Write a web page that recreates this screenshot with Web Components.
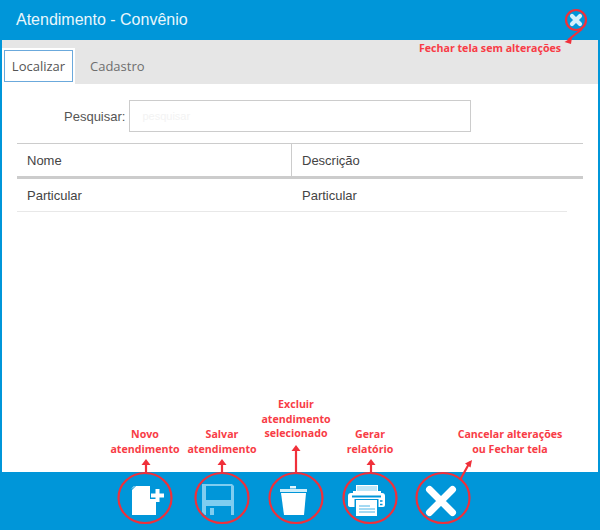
<!DOCTYPE html>
<html lang="pt-BR">
<head>
<meta charset="utf-8">
<title>Atendimento - Convênio</title>
<style>
html, body { margin: 0; height: 100%; background: #fff; }
</style>
</head>
<body>
<app-window>
  <title-bar slot="top">Atendimento - Convênio</title-bar>
  <tab-bar slot="top"></tab-bar>
  <search-row></search-row>
  <data-table></data-table>
  <action-bar slot="bottom"></action-bar>
  <help-notes slot="over"></help-notes>
</app-window>

<script>
class AppWindow extends HTMLElement {
    connectedCallback() {
        this.attachShadow({ mode: 'open' });
        this.shadowRoot.innerHTML = `
            <style>
                :host {
                    display: flex;
                    flex-direction: column;
                    position: relative;
                    width: 600px;
                    height: 530px;
                    box-sizing: border-box;
                    background: #0096d9;
                    overflow: hidden;
                }
                .body {
                    flex: 1;
                    background: #fff;
                    margin: 0 2px;
                    min-height: 0;
                }
            </style>
            <slot name="top"></slot>
            <div class="body"><slot></slot></div>
            <slot name="bottom"></slot>
            <slot name="over"></slot>
        `;
    }
}

class TitleBar extends HTMLElement {
    connectedCallback() {
        this.attachShadow({ mode: 'open' });
        this.shadowRoot.innerHTML = `
            <style>
                :host {
                    display: flex;
                    align-items: center;
                    justify-content: space-between;
                    height: 40px;
                    padding: 0 14px 0 16px;
                    box-sizing: border-box;
                    background: #0096d9;
                    color: #e9f6fc;
                    font: 16px "Liberation Sans", Arial, sans-serif;
                }
                svg { display: block; }
            </style>
            <span><slot></slot></span>
            <svg width="20" height="20" viewBox="0 0 20 20">
                <path d="M6 6 14 14M14 6 6 14" stroke="#d5effb" stroke-width="4.2" stroke-linecap="round" fill="none"/>
            </svg>
        `;
    }
}

class TabBar extends HTMLElement {
    connectedCallback() {
        this.attachShadow({ mode: 'open' });
        this.shadowRoot.innerHTML = `
            <style>
                :host {
                    display: flex;
                    align-items: flex-end;
                    height: 44px;
                    margin: 0 2px;
                    box-sizing: border-box;
                    background: #e6e6e6;
                    font: 13px "Open Sans", sans-serif;
                }
                .tab {
                    height: 36px;
                    box-sizing: border-box;
                    padding: 2px;
                    background: #fff;
                    width: 73px;
                }
                .tab span {
                    display: flex;
                    align-items: center;
                    justify-content: center;
                    height: 32px;
                    box-sizing: border-box;
                    border: 1px solid #6ba9dc;
                    color: #555;
                }
                .other {
                    padding-left: 15px;
                    height: 34px;
                    line-height: 32px;
                    color: #6e6e6e;
                }
            </style>
            <div class="tab"><span>Localizar</span></div>
            <div class="other">Cadastro</div>
        `;
    }
}

class SearchRow extends HTMLElement {
    connectedCallback() {
        this.attachShadow({ mode: 'open' });
        this.shadowRoot.innerHTML = `
            <style>
                :host {
                    display: flex;
                    align-items: center;
                    gap: 4px;
                    height: 32px;
                    margin-top: 16px;
                    padding-left: 62px;
                    font: 13px "Liberation Sans", Arial, sans-serif;
                    color: #555;
                }
                input {
                    width: 342px;
                    height: 32px;
                    box-sizing: border-box;
                    border: 1px solid #ccc;
                    padding: 0 12px;
                    margin: 0;
                    font: 11px "Liberation Sans", Arial, sans-serif;
                    outline: none;
                }
                input::placeholder { color: #f3f3f3; }
            </style>
            <label>Pesquisar:</label>
            <input placeholder="pesquisar">
        `;
    }
}

class DataTable extends HTMLElement {
    connectedCallback() {
        this.attachShadow({ mode: 'open' });
        this.shadowRoot.innerHTML = `
            <style>
                :host {
                    display: block;
                    margin: 11px 15px 0 15px;
                    font: 13px "Liberation Sans", Arial, sans-serif;
                    color: #444;
                }
                .head {
                    display: grid;
                    grid-template-columns: 274px 1fr;
                    height: 32px;
                    border-top: 1px solid #ccc;
                    border-bottom: 3px solid #ccc;
                }
                .head div, .row div {
                    display: flex;
                    align-items: center;
                    padding-left: 10px;
                }
                .head div + div { border-left: 1px solid #ccc; }
                .row {
                    display: grid;
                    grid-template-columns: 275px 1fr;
                    height: 32px;
                    margin-right: 16px;
                    border-bottom: 1px solid #e8e8e8;
                }
            </style>
            <div class="head"><div>Nome</div><div>Descrição</div></div>
            <div class="row"><div>Particular</div><div>Particular</div></div>
        `;
    }
}

class ActionBar extends HTMLElement {
    connectedCallback() {
        this.attachShadow({ mode: 'open' });
        this.shadowRoot.innerHTML = `
            <style>
                :host {
                    display: flex;
                    align-items: center;
                    gap: 20px;
                    height: 58px;
                    padding-left: 118px;
                    box-sizing: border-box;
                    background: #0096d9;
                }
                button {
                    width: 54px;
                    height: 50px;
                    padding: 0;
                    border: 0;
                    background: none;
                    display: flex;
                    align-items: center;
                    justify-content: center;
                }
                svg { display: block; }
            </style>
            <button title="Novo">
                <svg width="40" height="36" viewBox="0 0 40 36">
                    <path d="M11 3H25V16H31V32H7V7Z" fill="#fff"/>
                    <path d="M7 5.500 9.500 3" stroke="#cdeefb" stroke-width="1"/>
                    <path d="M32.500 6V19M26 12.500H39" stroke="#fff" stroke-width="4"/>
                </svg>
            </button>
            <button title="Salvar">
                <svg width="34" height="34" viewBox="0 0 34 34">
                    <path fill-rule="evenodd" fill="#7fcdf0" d="M0 0H30L32 2V31H3L0 28ZM4 2V16H29V2ZM4 22V31H8V24H12V31H29V22Z"/>
                </svg>
            </button>
            <button title="Excluir">
                <svg width="30" height="34" viewBox="0 0 30 34">
                    <path d="M12 2H18V4.500H12Z" fill="#e2f5fc"/>
                    <path d="M2 5H29V8H2Z" fill="#cfeefa"/>
                    <path d="M3 9H28L26 31H6Z" fill="#fff"/>
                </svg>
            </button>
            <button title="Gerar">
                <svg width="38" height="34" viewBox="0 0 38 34">
                    <rect x="8.500" y="1.500" width="21" height="6" fill="#bde6f7" stroke="#fff"/>
                    <path d="M5 7H33V10H5Z" fill="#fff"/>
                    <path d="M0 12Q0 9 3 9H34Q37 9 37 12V21Q37 23 35 23H3Q0 23 0 21Z" fill="#fff"/>
                    <path d="M4 12.500H33" stroke="#0096d9" stroke-width="2"/>
                    <rect x="6.500" y="15" width="24" height="19" fill="#0096d9"/>
                    <rect x="8" y="16" width="21" height="16" fill="#fff"/>
                    <path d="M11 22H22M11 25H27M11 28H27" stroke="#4ab4e6" stroke-width="1"/>
                    <path d="M32 17H34.500M32 20.500H34.500" stroke="#0096d9" stroke-width="1.500"/>
                </svg>
            </button>
            <button title="Cancelar">
                <svg width="34" height="34" viewBox="0 0 34 34">
                    <path d="M5.500 5.500 28.500 28.500M28.500 5.500 5.500 28.500" stroke="#fff" stroke-width="7" stroke-linecap="round" fill="none"/>
                </svg>
            </button>
        `;
    }
}

class HelpNotes extends HTMLElement {
    connectedCallback() {
        this.attachShadow({ mode: 'open' });
        const notes = [
            [490, 41, 'Fechar tela sem alterações'],
            [145, 427, 'Novo<br>atendimento'],
            [222, 427, 'Salvar<br>atendimento'],
            [296, 397, 'Excluir<br>atendimento<br>selecionado'],
            [370, 427, 'Gerar<br>relatório'],
            [510, 427, 'Cancelar alterações<br>ou Fechar tela'],
        ];
        const notesHtml = notes.map(n => `<div class="note" style="left:${n[0]}px;top:${n[1]}px">${n[2]}</div>`).join('');
        const rings = [145, 222, 296, 370, 443].map(x =>
            `<ellipse cx="${x}" cy="498" rx="26.500" ry="25"/>`).join('');
        const arrow = (x1, y1, x2, y2) => `<path d="M${x1} ${y1} ${x2} ${y2}"/>`;
        this.shadowRoot.innerHTML = `
            <style>
                :host {
                    position: absolute;
                    inset: 0;
                    display: block;
                    pointer-events: none;
                    color: #f83c46;
                    font: bold 10.650px/14.500px "Open Sans", sans-serif;
                }
                svg { position: absolute; left: 0; top: 0; }
                .note {
                    position: absolute;
                    transform: translateX(-50%);
                    white-space: nowrap;
                    text-align: center;
                }
            </style>
            <svg width="600" height="530" fill="none" stroke="#f0303a" stroke-width="2.200">
                ${rings}
                <circle cx="576" cy="20" r="10"/>
                ${arrow(146, 473, 146, 462)}
                ${arrow(222, 473, 222, 462)}
                ${arrow(296, 473, 296, 448)}
                ${arrow(371, 473, 371, 462)}
                ${arrow(460, 480, 470, 462)}
                ${arrow(582, 29, 568, 40)}
                <g fill="#f0303a" stroke="none">
                    <path d="M146 459l-4.500 6h9Z"/>
                    <path d="M222 459l-4.500 6h9Z"/>
                    <path d="M296 445l-4.500 6h9Z"/>
                    <path d="M371 459l-4.500 6h9Z"/>
                    <path d="M472 460l-7 3.500 5.500 4Z"/>
                    <path d="M564.500 42l7.500 -4.500 -1 6.500Z"/>
                </g>
            </svg>
            ${notesHtml}
        `;
    }
}

customElements.define('app-window', AppWindow);
customElements.define('title-bar', TitleBar);
customElements.define('tab-bar', TabBar);
customElements.define('search-row', SearchRow);
customElements.define('data-table', DataTable);
customElements.define('action-bar', ActionBar);
customElements.define('help-notes', HelpNotes);
</script>
</body>
</html>
